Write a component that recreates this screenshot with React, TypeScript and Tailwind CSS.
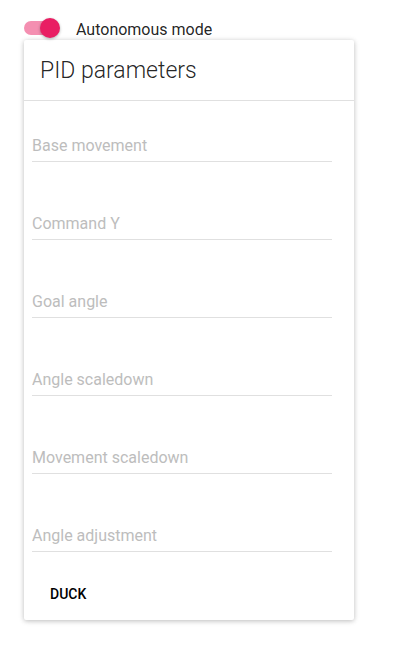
import { useState } from 'react';

const fields = [
    'Base movement',
    'Command Y',
    'Goal angle',
    'Angle scaledown',
    'Movement scaledown',
    'Angle adjustment',
];

export default function App() {
    const [autonomous, setAutonomous] = useState(true);

    return (
        <div className="min-h-[648px] bg-white px-6 pt-[18px] font-['Roboto',sans-serif] text-[rgba(0,0,0,0.87)]">
            <div className="flex h-5 items-center">
                <button
                    className="relative h-5 w-9 shrink-0"
                    onClick={() => setAutonomous((current) => !current)}
                >
                    <span
                        className={`absolute left-0 top-[3px] h-[14px] w-[33px] rounded-full ${autonomous ? 'bg-[#f48fb1]' : 'bg-[#bdbdbd]'}`}
                    />
                    <span
                        className={`absolute top-0 h-5 w-5 rounded-full shadow-[0_1px_3px_rgba(0,0,0,0.3)] ${autonomous ? 'left-4 bg-[#e91e63]' : 'left-0 bg-[#f5f5f5]'}`}
                    />
                </button>
                <span className="ml-4 mt-[3px] text-base leading-5">Autonomous mode</span>
            </div>

            <div className="mt-[2px] w-[330px] rounded-[2px] bg-white shadow-[0_1px_6px_rgba(0,0,0,0.12),0_1px_4px_rgba(0,0,0,0.16)]">
                <div className="flex h-[61px] items-center border-b border-[#e0e0e0] px-4">
                    <h1 className="mt-[2px] text-[23px] font-light leading-9 text-[rgba(0,0,0,0.87)]">PID parameters</h1>
                </div>

                <div className="flex flex-col gap-[50px] px-2 pt-[33px]">
                    {fields.map((label) => (
                        <div key={label} className="w-[300px] border-b border-[#e0e0e0] pb-[3px]">
                            <input
                                className="h-6 w-full bg-transparent text-base leading-6 outline-none placeholder:text-[#bdbdbd]"
                                placeholder={label}
                            />
                        </div>
                    ))}
                </div>

                <div className="mt-4 p-2">
                    <button className="ml-[2px] h-9 rounded-[2px] px-4 text-sm font-medium uppercase text-black">
                        Duck
                    </button>
                </div>
            </div>
        </div>
    );
}
